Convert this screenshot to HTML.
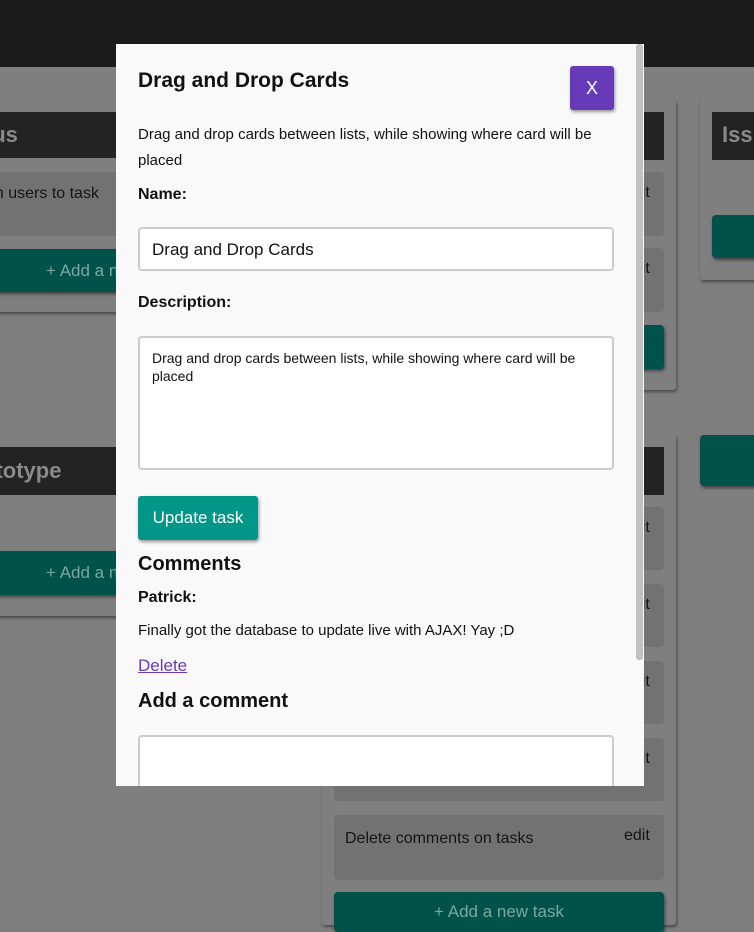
<!DOCTYPE html>
<html><head><style>
*{box-sizing:border-box;margin:0;padding:0}
body{width:754px;height:912px;overflow:hidden;background:#7f7f7f;font-family:"Liberation Sans",sans-serif;position:relative}
.a{position:absolute}
.top{left:0;top:0;width:754px;height:67px;background:#1b1b1b}
.list{background:#7f7f7f;border-radius:3px;box-shadow:1px 2px 3px rgba(0,0,0,.45)}
.hd{background:#232323;color:#8a8a8a;font-weight:bold;font-size:22px;padding-left:12px;line-height:46px;overflow:hidden;white-space:nowrap}
.card{background:#727272;border-radius:4px;color:#151515;font-size:16px}
.btn{background:#00524a;border-radius:4px;color:#7aa8a0;font-size:17px;text-align:center;box-shadow:1px 2px 3px rgba(0,0,0,.5)}
.modal{left:116px;top:44px;width:528px;height:742px;background:#f9f9f9;overflow:hidden}
.sb{left:636px;top:44px;width:7px;height:616px;background:#c1c1c1;border-radius:3px}
.m{color:#111}
.e{left:290px;top:12px}
</style></head><body>
<div class="a top"></div>
<div class="a list" style="left:-10px;top:98px;width:132px;height:214px"></div>
<div class="a hd" style="left:-20px;top:112px;width:142px;height:46px;padding-left:0">cus</div>
<div class="a card" style="left:-10px;top:172px;width:132px;height:64px;padding:13px 0 0 0;white-space:nowrap;overflow:hidden;text-indent:-4px">gn users to task</div>
<div class="a btn" style="left:-10px;top:249px;width:132px;height:43px;line-height:43px;text-align:left;padding-left:56px;white-space:nowrap;overflow:hidden">+ Add a n</div>
<div class="a list" style="left:-10px;top:432px;width:132px;height:184px"></div>
<div class="a hd" style="left:-18px;top:447px;width:140px;height:48px;line-height:48px;padding-left:0">ototype</div>
<div class="a btn" style="left:-10px;top:551px;width:132px;height:44px;line-height:44px;text-align:left;padding-left:56px;white-space:nowrap;overflow:hidden">+ Add a n</div>
<div class="a list" style="left:322px;top:100px;width:354px;height:290px"></div>
<div class="a hd" style="left:334px;top:112px;width:330px;height:48px"></div>
<div class="a card" style="left:334px;top:172px;width:330px;height:64px"><span class="a e">edit</span></div>
<div class="a card" style="left:334px;top:248px;width:330px;height:64px"><span class="a e">edit</span></div>
<div class="a btn" style="left:334px;top:325px;width:330px;height:44px"></div>
<div class="a list" style="left:322px;top:435px;width:354px;height:490px"></div>
<div class="a hd" style="left:334px;top:447px;width:330px;height:48px"></div>
<div class="a card" style="left:334px;top:507px;width:330px;height:63px"><span class="a e">edit</span></div>
<div class="a card" style="left:334px;top:584px;width:330px;height:63px"><span class="a e">edit</span></div>
<div class="a card" style="left:334px;top:661px;width:330px;height:63px"><span class="a e">edit</span></div>
<div class="a card" style="left:334px;top:738px;width:330px;height:63px"><span class="a e">edit</span></div>
<div class="a card" style="left:334px;top:815px;width:330px;height:65px"><span class="a" style="left:11px;top:15px">Delete comments on tasks</span><span class="a e">edit</span></div>
<div class="a btn" style="left:334px;top:892px;width:330px;height:40px;line-height:40px">+ Add a new task</div>
<div class="a list" style="left:700px;top:98px;width:70px;height:182px"></div>
<div class="a hd" style="left:712px;top:112px;width:50px;height:48px;padding-left:10px">Iss</div>
<div class="a btn" style="left:712px;top:215px;width:50px;height:43px"></div>
<div class="a btn" style="left:700px;top:435px;width:60px;height:51px"></div>
<div class="a modal">
<div class="a m" style="left:22px;top:25px;font-size:21px;font-weight:bold">Drag and Drop Cards</div>
<div class="a" style="left:454px;top:22px;width:44px;height:44px;background:#673ab7;color:#fff;border-radius:3px;font-size:18px;text-align:center;line-height:44px;box-shadow:1px 2px 3px rgba(0,0,0,.4)">X</div>
<div class="a m" style="left:22px;top:78px;width:470px;font-size:15px;line-height:26px">Drag and drop cards between lists, while showing where card will be placed</div>
<div class="a m" style="left:22px;top:142px;font-size:16px;font-weight:bold">Name:</div>
<div class="a" style="left:22px;top:183px;width:476px;height:44px;border:2px solid #ccc;border-radius:4px;background:#fff;font-size:17px;padding:11px 0 0 12px;color:#111">Drag and Drop Cards</div>
<div class="a m" style="left:22px;top:250px;font-size:16px;font-weight:bold">Description:</div>
<div class="a" style="left:22px;top:292px;width:476px;height:134px;border:2px solid #ccc;border-radius:4px;background:#fff;font-size:14px;line-height:18px;padding:11px 12px;color:#111">Drag and drop cards between lists, while showing where card will be placed</div>
<div class="a" style="left:22px;top:452px;width:120px;height:44px;background:#009688;color:#fff;border-radius:3px;font-size:17px;line-height:44px;text-align:center;box-shadow:1px 2px 3px rgba(0,0,0,.4)">Update task</div>
<div class="a m" style="left:22px;top:509px;font-size:20px;font-weight:bold">Comments</div>
<div class="a m" style="left:22px;top:545px;font-size:16px;font-weight:bold">Patrick:</div>
<div class="a m" style="left:22px;top:578px;font-size:15px">Finally got the database to update live with AJAX! Yay ;D</div>
<div class="a" style="left:22px;top:612px;font-size:17px;color:#673ab7;text-decoration:underline">Delete</div>
<div class="a m" style="left:22px;top:646px;font-size:20px;font-weight:bold">Add a comment</div>
<div class="a" style="left:22px;top:691px;width:476px;height:80px;border:2px solid #ccc;border-radius:4px;background:#fff"></div>
</div>
<div class="a sb"></div>
</body></html>
